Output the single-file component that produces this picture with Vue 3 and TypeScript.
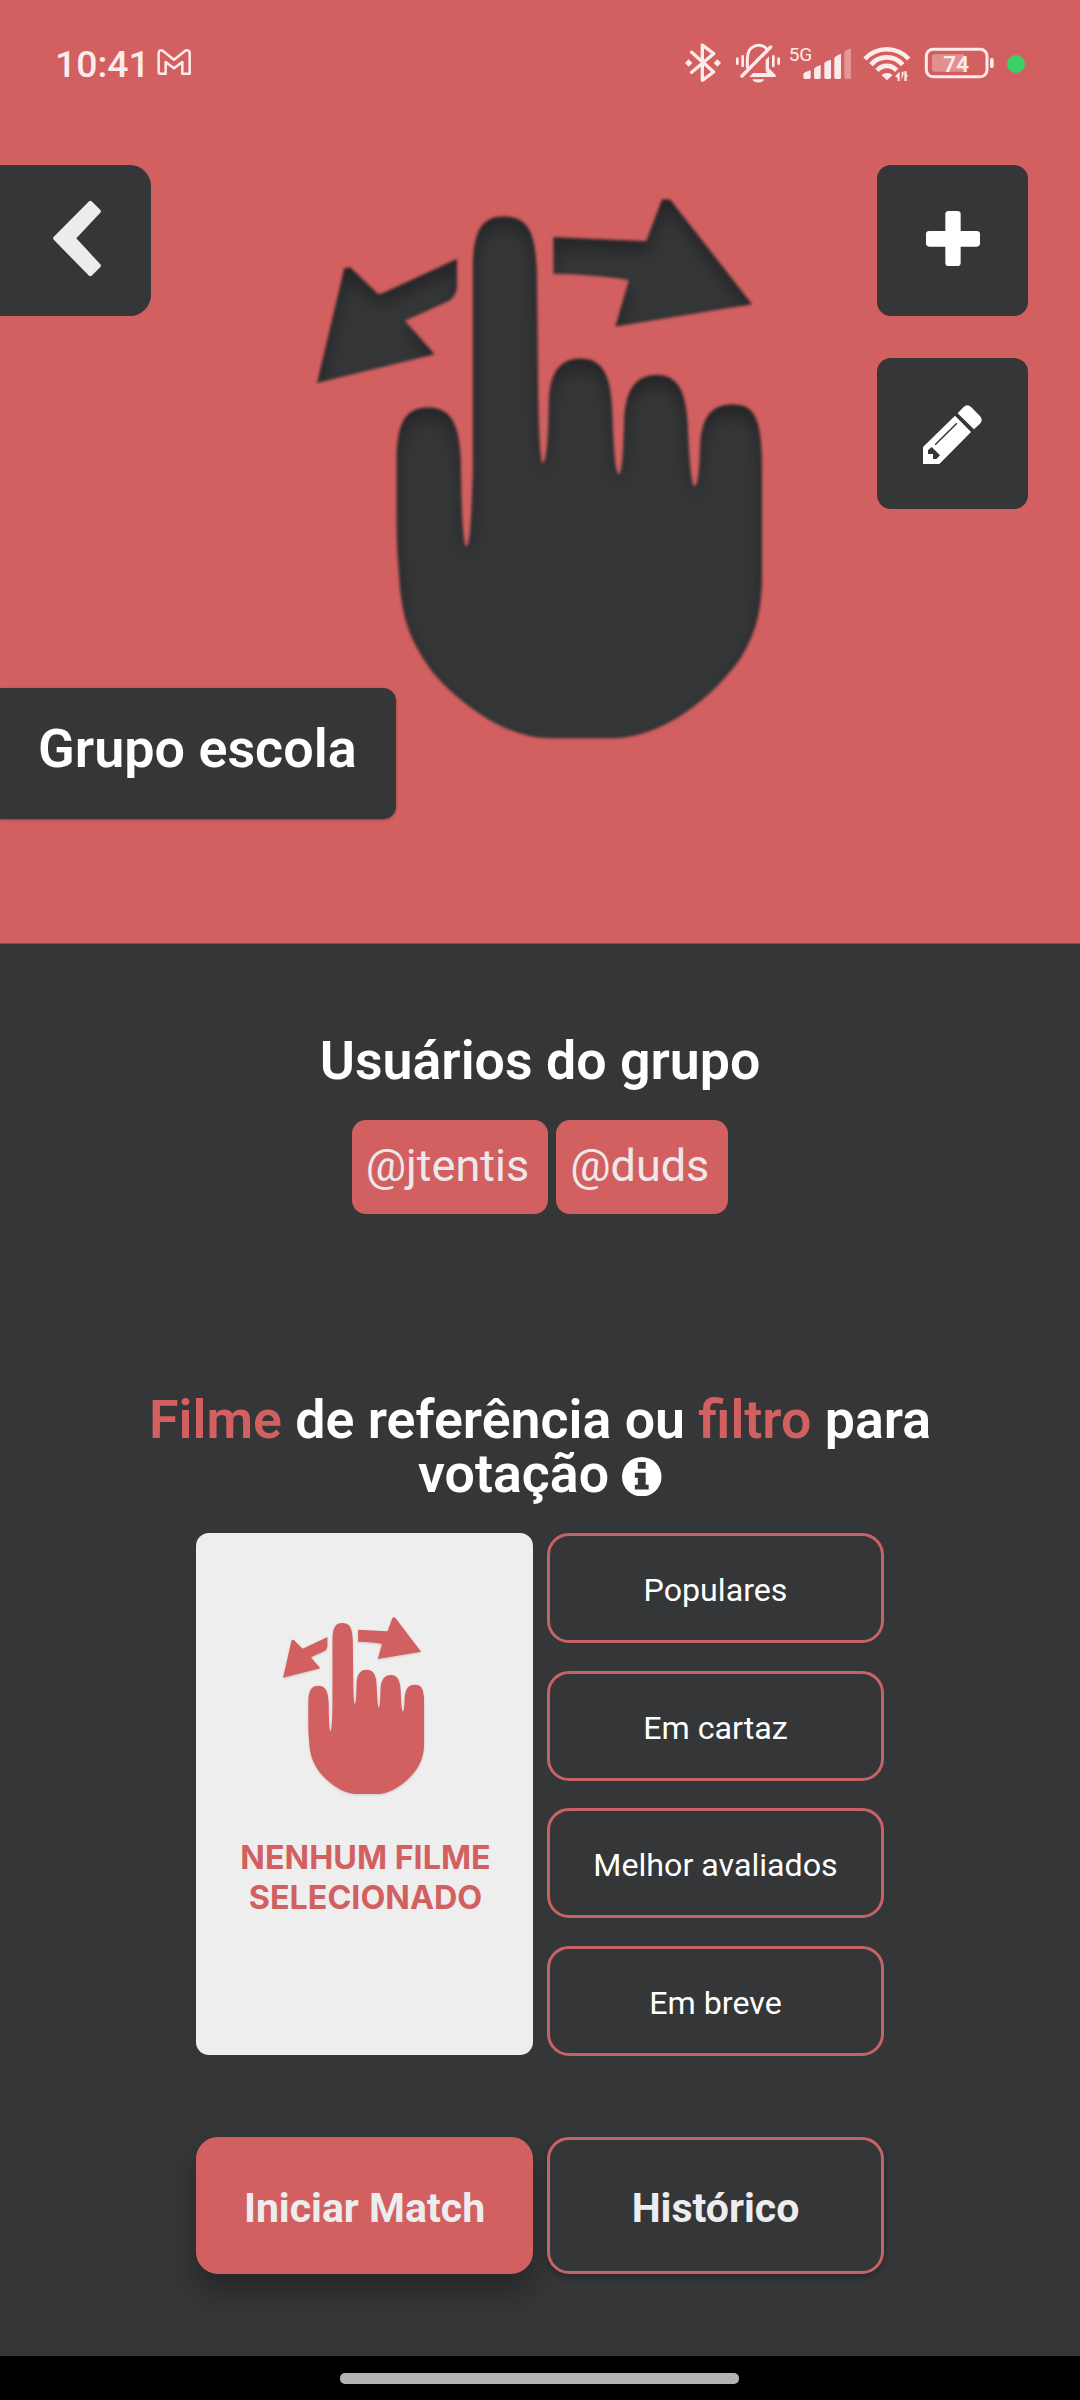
<script setup lang="ts">
import { ref } from 'vue'

const groupName = ref<string>('Grupo escola')
const users = ref<string[]>(['jtentis', 'duds'])
const filters: string[] = ['Populares', 'Em cartaz', 'Melhor avaliados', 'Em breve']
</script>

<template>
  <div class="screen">
    <svg class="defs" aria-hidden="true">
      <defs>
        <symbol id="swipe-hand" viewBox="52 48 1336 1462" preserveAspectRatio="none">
          <path d="M291 760C291 660 314 614 386 614C452 614 480 655 484 760C485 850 489 990 501 990C514 980 516 880 520 790V230C522 130 552 98 612 98C682 98 707 135 712 240L716 580C718 680 722 765 731 765C742 750 746 700 748 600C750 520 782 482 842 482C905 482 934 520 938 620C942 700 946 795 959 795C970 785 972 710 974 650C978 560 1012 526 1072 526C1135 526 1160 570 1165 660C1168 730 1174 828 1187 828C1200 810 1200 760 1202 720C1206 640 1236 606 1300 606C1365 606 1388 640 1388 780V1060C1388 1160 1372 1220 1325 1290C1245 1395 1090 1508 940 1508H750C620 1508 480 1415 400 1330C335 1250 305 1190 298 1060C292 1000 291 960 291 900Z" />
          <path d="M134 238L152 236L236 308Q250 308 262 300L472 213V290Q470 318 440 330L316 380L405 470L52 548Z" />
          <path d="M1088 52H1112L1358 335L948 395L988 270Q900 256 762 253V154L1040 165Z" />
        </symbol>
        <filter id="inner-shade" x="-5%" y="-5%" width="110%" height="110%" color-interpolation-filters="sRGB">
          <feGaussianBlur in="SourceAlpha" stdDeviation="9" />
          <feOffset dy="10" result="soft" />
          <feComposite in="SourceAlpha" in2="soft" operator="out" result="edge" />
          <feFlood flood-color="#000" flood-opacity="0.34" />
          <feComposite in2="edge" operator="in" result="shade" />
          <feMerge result="shaded">
            <feMergeNode in="SourceGraphic" />
            <feMergeNode in="shade" />
          </feMerge>
          <feGaussianBlur in="shaded" stdDeviation="1.6" />
        </filter>
      </defs>
    </svg>

    <section class="hero">
      <header class="status">
        <span class="time">10:41</span>
        <svg class="gmail" viewBox="468 144 108 84">
          <path d="M476 159C476 150 484 149 490 154L522 179L554 154C560 149 569 150 569 159V221H547V186L522 205L497 186V221H482Q476 221 476 215Z" fill="none" stroke="#fdeaea" stroke-width="7.500" stroke-linejoin="round" />
        </svg>
        <div class="indicators">
          <svg width="38" height="48" viewBox="72 120 114 144">
            <path d="M95 157L161 216L127 241V135L161 161L95 217" fill="none" stroke="#fdeaea" stroke-width="10" stroke-linejoin="round" stroke-linecap="round" />
            <path d="M86 178L97 189L86 200L75 189ZM172 178L183 189L172 200L161 189Z" fill="#fdeaea" />
          </svg>
          <svg class="bell" width="48" height="48" viewBox="222 120 144 144">
            <g fill="none" stroke="#fdeaea" stroke-width="9" stroke-linecap="round">
              <path d="M262 202V176C262 130 310 126 322 150" />
              <path d="M332 141L246 228" stroke-width="10" />
            </g>
            <path d="M327 169V205L347 225V231H268L279 219H321L317 212V180Z" fill="#fdeaea" />
            <path d="M277 238H312C309 251 281 251 277 238Z" fill="#fdeaea" />
            <path d="M232 176V191M248 169V198M340 169V198M356 176V191" stroke="#fdeaea" stroke-width="8" stroke-linecap="round" />
          </svg>
          <svg class="signal" width="64" height="48" viewBox="384 120 192 144">
            <text x="386" y="182" font-size="56" textLength="71" lengthAdjust="spacingAndGlyphs">5G</text>
            <g fill="#fdeaea">
              <path d="M430 221L436 216L452 211V232Q452 237 447 237H435Q430 237 430 232Z" />
              <path d="M462 206L468 201L482 195V232Q482 237 477 237H467Q462 237 462 232Z" />
              <path d="M493 190L499 184L513 179V232Q513 237 508 237H498Q493 237 493 232Z" />
              <path d="M523 173L529 168L543 161V232Q543 237 538 237H528Q523 237 523 232Z" />
              <path d="M553 156L559 151L573 145V232Q573 237 568 237H558Q553 237 553 232Z" opacity="0.4" />
            </g>
          </svg>
          <svg class="wifi" width="49" height="48" viewBox="606 120 147 144">
            <g fill="none" stroke="#fdeaea" stroke-width="14">
              <path d="M615 177C650 138 711 138 746 177" />
              <path d="M633 194C658 165 703 165 728 194" />
              <path d="M651 211C668 193 693 193 710 211" />
            </g>
            <path d="M665 226C672 217 690 217 697 226L681 241Z" fill="#fdeaea" />
            <path d="M719 215V243H713V234L705 229ZM725 243V215H731V222L724 243ZM733 214H740V224L747 229H740V243H733Z" fill="#fdeaea" />
          </svg>
          <svg class="battery" width="71" height="48" viewBox="792 120 213 144">
            <rect x="799" y="148" width="182" height="82" rx="20" fill="none" stroke="#fdeaea" stroke-width="9" />
            <path d="M824 163H912V215H824Q816 215 816 207V171Q816 163 824 163Z" fill="#e28f8f" />
            <rect x="990" y="174" width="11" height="30" rx="5" fill="#fdeaea" />
            <text x="850" y="215" font-size="68" font-weight="600" textLength="77" lengthAdjust="spacingAndGlyphs">74</text>
          </svg>
          <i class="privacy-dot"></i>
        </div>
      </header>

      <div class="banner">
        <svg class="hand"><use href="#swipe-hand" width="445" height="541" /></svg>
        <button class="back" aria-label="Voltar">
          <svg viewBox="0 495 453 453">
            <path d="M271 609L296 634L220 715L296 797L271 822L166 715Z" fill="#ebecee" stroke="#ebecee" stroke-width="13" stroke-linejoin="round" />
          </svg>
        </button>
        <div class="actions">
          <button class="action" aria-label="Adicionar">
            <svg viewBox="111 75 453 453" fill="#fff">
              <rect x="316" y="213" width="46" height="165" rx="10" />
              <rect x="258" y="273" width="162" height="47" rx="10" />
            </svg>
          </button>
          <button class="action" aria-label="Editar">
            <svg viewBox="111 654 453 453">
              <path d="M249 921L345 827L393 876L298 972H249ZM353 820L370 802Q382 790 394 802L419 827Q431 840 419 852L402 868Z" fill="#fff" />
              <path d="M275 921L300 946L289 957H279V942H264V931Z" fill="#353638" />
              <path d="M287 913L349 851" stroke="#353638" stroke-width="4.500" stroke-linecap="round" />
            </svg>
          </button>
        </div>
        <h1 class="group-name">{{ groupName }}</h1>
      </div>
    </section>

    <main class="content">
      <h2 class="heading">Usuários do grupo</h2>
      <div class="users">
        <span v-for="user in users" :key="user" class="user">@{{ user }}</span>
      </div>

      <h2 class="heading reference">
        <em>Filme</em> de referência ou <em>filtro</em> para<br />votação
        <svg class="info" viewBox="0 0 40 40">
          <circle cx="20" cy="20" r="20" fill="#fff" />
          <path d="M16 5H24V12H16ZM13 16H24V28H27V33H13V28H16V21H13Z" fill="#353638" />
        </svg>
      </h2>

      <div class="picker">
        <div class="poster">
          <svg class="poster-hand"><use href="#swipe-hand" width="141.300" height="177.400" /></svg>
          <p>NENHUM FILME<br />SELECIONADO</p>
        </div>
        <div class="filters">
          <button v-for="filter in filters" :key="filter" class="filter">{{ filter }}</button>
        </div>
      </div>

      <div class="footer-actions">
        <button class="cta primary">Iniciar Match</button>
        <button class="cta">Histórico</button>
      </div>
    </main>

    <footer class="nav"><i class="pill"></i></footer>
  </div>
</template>

<style>
body {
  margin: 0;
  background: #353638;
}
</style>

<style scoped>
.screen {
  width: 1080px;
  height: 2400px;
  display: flex;
  flex-direction: column;
  overflow: hidden;
  background: #353638;
  color: #fff;
  font-family: Roboto, sans-serif;
}
.defs {
  position: absolute;
  width: 0;
  height: 0;
}
button {
  margin: 0;
  padding: 0;
  border: 0;
  background: none;
  color: inherit;
  font-family: inherit;
}
h1,
h2,
p {
  margin: 0;
}
.hero {
  flex: none;
  height: 944px;
  box-sizing: border-box;
  border-bottom: 1px solid #8b4a4b;
  background: #d36060;
}
.status {
  height: 128px;
  box-sizing: border-box;
  padding: 0 55px;
  display: flex;
  align-items: center;
  color: #fdeaea;
}
.time {
  font-size: 37.4px;
  font-weight: 500;
  line-height: 44px;
}
.gmail {
  width: 36px;
  height: 28px;
  margin: 0 0 4px 6px;
}
.indicators {
  margin-left: auto;
  display: flex;
  align-items: center;
}
.indicators text {
  fill: #fdeaea;
  font-family: Roboto, sans-serif;
}
.bell {
  margin-left: 12px;
}
.signal {
  margin-left: 6px;
}
.wifi {
  margin-left: 10px;
}
.battery {
  margin-left: 13px;
}
.privacy-dot {
  width: 18px;
  height: 18px;
  margin-left: 12px;
  border-radius: 50%;
  background: #38d266;
}
.banner {
  display: grid;
  grid-template-columns: 1fr auto;
  padding-top: 37px;
}
.banner > * {
  grid-row: 1;
}
.hand {
  grid-column: 1 / -1;
  width: 445px;
  height: 541px;
  margin: 33px 0 0 317px;
  overflow: visible;
  fill: #353638;
  filter: url(#inner-shade);
}
.back {
  grid-column: 1;
  width: 151px;
  height: 151px;
  border-radius: 0 21px 21px 0;
  background: #353638;
}
.back svg,
.action svg {
  display: block;
  width: 151px;
  height: 151px;
}
.actions {
  grid-column: 2;
  display: flex;
  flex-direction: column;
  gap: 42px;
  margin-right: 52px;
}
.action {
  width: 151px;
  height: 151px;
  border-radius: 14px;
  background: #353638;
}
.group-name {
  grid-column: 1;
  justify-self: start;
  width: 396px;
  height: 131px;
  margin-top: 523px;
  padding: 34px 0 0 38px;
  box-sizing: border-box;
  border-radius: 0 13px 13px 0;
  background: #353638;
  box-shadow: 0 1px 3px rgba(0, 0, 0, 0.35);
  font-size: 53.9px;
  font-weight: 600;
  line-height: 54px;
}
.content {
  flex: 1;
  display: flex;
  flex-direction: column;
  align-items: center;
  padding-top: 90px;
}
.heading {
  font-size: 53.7px;
  font-weight: 600;
  line-height: 54px;
  text-align: center;
}
.users {
  display: flex;
  gap: 8px;
  margin-top: 32px;
}
.user {
  height: 94px;
  padding: 1px 19px 3px 14px;
  box-sizing: border-box;
  border-radius: 14px;
  background: #d36060;
  color: #efe8ea;
  font-size: 45px;
  line-height: 90px;
}
.reference {
  margin-top: 179px;
}
.reference em {
  font-style: normal;
  color: #d36060;
}
.info {
  width: 39.5px;
  height: 39.5px;
  vertical-align: -4px;
}
.picker {
  display: flex;
  gap: 14px;
  margin-top: 32px;
}
.poster {
  width: 337px;
  height: 522px;
  box-sizing: border-box;
  padding-top: 84px;
  border-radius: 13px;
  background: #eee;
  color: #d36060;
  text-align: center;
}
.poster-hand {
  display: block;
  width: 141.3px;
  height: 177.4px;
  margin-left: 87.3px;
  fill: #d36060;
  filter: drop-shadow(0 1px 1px rgba(0, 0, 0, 0.15));
}
.poster p {
  margin: 43.5px 0 0 2px;
  font: 700 32.3px/40px Inter, sans-serif;
}
.filters {
  display: flex;
  flex-direction: column;
  justify-content: space-between;
  height: 523px;
}
.filter {
  width: 337px;
  height: 110px;
  padding-top: 4px;
  box-sizing: border-box;
  border: 3px solid #c56366;
  border-radius: 22px;
  font-size: 32.2px;
}
.footer-actions {
  display: flex;
  gap: 14px;
  margin-top: 81px;
}
.cta {
  width: 337px;
  height: 137px;
  padding-top: 5px;
  box-sizing: border-box;
  border: 3px solid #c56366;
  border-radius: 22px;
  background: #353638;
  box-shadow: 0 3px 7px rgba(0, 0, 0, 0.3);
  color: #edecee;
  font-size: 41px;
  font-weight: 700;
}
.cta.primary {
  border-color: #d36060;
  background: #d36060;
  box-shadow: 0 18px 30px rgba(0, 0, 0, 0.3);
}
.nav {
  flex: none;
  height: 44px;
  display: flex;
  justify-content: center;
  padding: 17px 2px 0 0;
  box-sizing: border-box;
  background: #000;
}
.pill {
  width: 399px;
  height: 11px;
  border-radius: 5px;
  background: #b3b3b3;
}
</style>
